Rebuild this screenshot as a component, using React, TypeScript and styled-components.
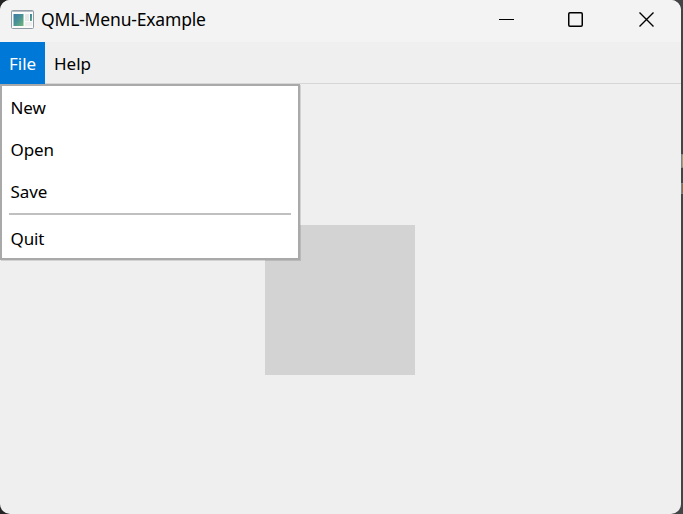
import React from 'react';
import styled, { createGlobalStyle } from 'styled-components';

const GlobalStyle = createGlobalStyle`
  * { box-sizing: border-box; }
  body { margin: 0; background: #434446; overflow: hidden; }
`;

const Desktop = styled.div`
  position: relative;
  width: 683px;
  height: 514px;
  background: linear-gradient(90deg, #242424 0, #303030 50%, #434446 100%);
  font-family: 'Noto Sans', 'Open Sans', sans-serif;
  color: #000;
`;

const Window = styled.div`
  display: flex;
  flex-direction: column;
  width: 681px;
  height: 514px;
  background: #efefef;
  border-radius: 10px;
  overflow: hidden;
`;

const TitleBar = styled.header`
  display: flex;
  align-items: center;
  flex: 0 0 42px;
  padding: 0 0 3px 11px;
  background: #f3f3f3;
`;

const Title = styled.h1`
  flex: 1;
  margin: 0 0 1px 7px;
  font-size: 17.5px;
  line-height: 24px;
  font-weight: 400;
  letter-spacing: -0.18px;
  white-space: nowrap;
`;

const WindowButtons = styled.div`
  display: flex;
`;

const WindowButton = styled.button<{ $width: number }>`
  display: flex;
  align-items: center;
  justify-content: center;
  width: ${(p) => p.$width}px;
  height: 39px;
  padding: 0;
  border: 0;
  background: none;

  &:last-child {
    padding-left: 2px;
  }
`;

const MenuBar = styled.nav`
  display: flex;
  flex: 0 0 42px;
  background: linear-gradient(#d6d6d6, #d6d6d6) 0 100% / 100% 1px no-repeat #efefef;
`;

const MenuTitle = styled.div<{ $active?: boolean }>`
  width: ${(p) => (p.$active ? '45px' : 'auto')};
  height: 42px;
  padding: 0 9px;
  font-size: 17px;
  line-height: 44px;
  color: ${(p) => (p.$active ? '#fff' : '#000')};
  background: ${(p) => (p.$active ? '#0078d7' : 'transparent')};
  white-space: nowrap;
`;

const Content = styled.main`
  display: flex;
  flex: 1;
  justify-content: center;
  padding: 141px 1px 0 0;
`;

const Square = styled.div`
  width: 150px;
  height: 150px;
  background: #d3d3d3;
`;

const Popup = styled.div`
  position: absolute;
  left: 0;
  top: 84px;
  width: 300px;
  height: 176px;
  padding: 1px 7px;
  border: 2px solid #a9a9a9;
  background: #fff;
  box-shadow: 1px 1px 0 rgba(0, 0, 0, 0.12);
`;

const MenuItem = styled.div`
  height: 42px;
  padding-left: 1.5px;
  font-size: 17px;
  line-height: 42px;
  letter-spacing: -0.1px;
`;

const Separator = styled.div`
  height: 2px;
  margin: 0 0 3px;
  background: #c0c0c0;
`;

const Fleck = styled.div<{ $top: number; $height: number; $color: string }>`
  position: absolute;
  left: 681px;
  top: ${(p) => p.$top}px;
  width: 2px;
  height: ${(p) => p.$height}px;
  background: ${(p) => p.$color};
  border: 1px solid #788386;
  border-width: 1px 0 1px 1px;
`;

const AppIcon = () => (
  <svg width="23" height="19" viewBox="0 0 23 19">
    <defs>
      <linearGradient id="pane" x1="0" y1="0" x2="1" y2="1">
        <stop offset="0" stopColor="#3c78a8" />
        <stop offset="0.5" stopColor="#4b9295" />
        <stop offset="1" stopColor="#71b878" />
      </linearGradient>
    </defs>
    <rect x="0.5" y="0.5" width="22" height="18" rx="1" fill="#fbfbfb" stroke="#909ba5" />
    <path d="M1 1.5h21" stroke="#b6bec5" />
    <rect x="2.5" y="4" width="10" height="12" fill="url(#pane)" />
    <rect x="14" y="4" width="4" height="7" fill="#e6e7e7" />
    <rect x="14" y="12" width="7" height="4" fill="#efefef" />
    <rect x="19" y="4" width="2" height="7" fill="url(#pane)" />
  </svg>
);

export default function App() {
  return (
    <>
      <GlobalStyle />
      <Desktop>
        <Window>
          <TitleBar>
            <AppIcon />
            <Title>QML-Menu-Example</Title>
            <WindowButtons>
              <WindowButton $width={69} aria-label="Minimize">
                <svg width="15" height="15" viewBox="0 0 15 15">
                  <path d="M0 7.5h15" stroke="#000" />
                </svg>
              </WindowButton>
              <WindowButton $width={69} aria-label="Maximize">
                <svg width="15" height="15" viewBox="0 0 15 15">
                  <rect x="0.75" y="0.75" width="13.5" height="13.5" rx="1.2" fill="none" stroke="#000" strokeWidth="1.5" />
                </svg>
              </WindowButton>
              <WindowButton $width={71} aria-label="Close">
                <svg width="15" height="15" viewBox="0 0 15 15">
                  <path d="M0.5 0.5l14 14M14.5 0.5l-14 14" stroke="#000" strokeWidth="1.4" />
                </svg>
              </WindowButton>
            </WindowButtons>
          </TitleBar>
          <MenuBar>
            <MenuTitle $active>File</MenuTitle>
            <MenuTitle>Help</MenuTitle>
          </MenuBar>
          <Content>
            <Square />
          </Content>
        </Window>
        <Popup>
          <MenuItem>New</MenuItem>
          <MenuItem>Open</MenuItem>
          <MenuItem>Save</MenuItem>
          <Separator />
          <MenuItem>Quit</MenuItem>
        </Popup>
        <Fleck $top={154} $height={14} $color="#a89c70" />
        <Fleck $top={183} $height={11} $color="#8f6b45" />
      </Desktop>
    </>
  );
}
